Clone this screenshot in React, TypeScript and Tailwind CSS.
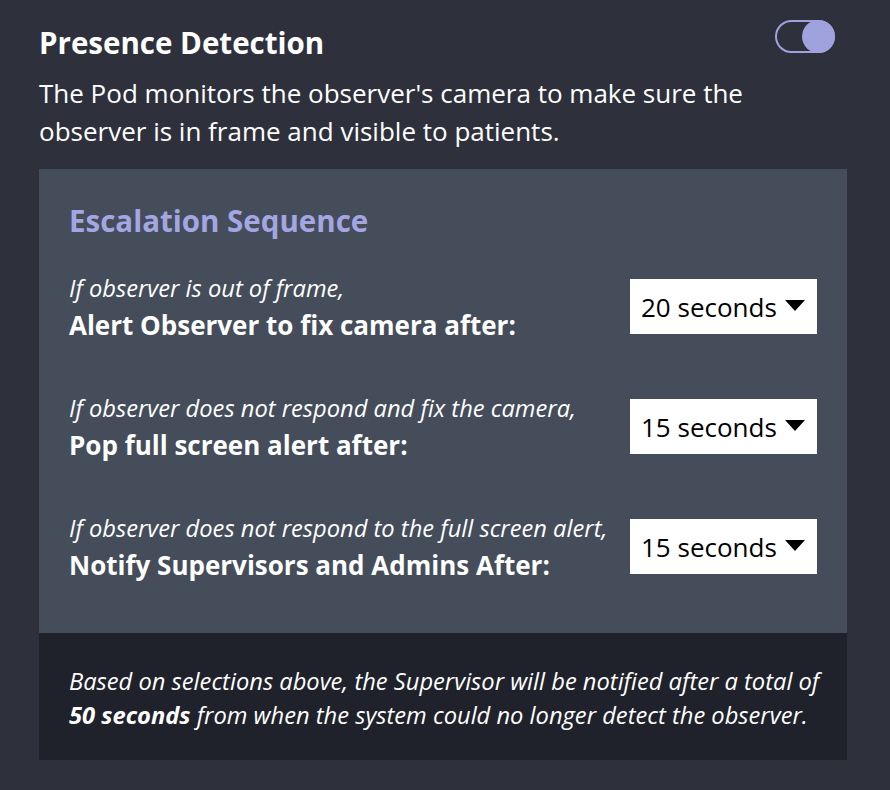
import React from "react";

function Dropdown({ value }: { value: string }) {
  return (
    <div className="mb-[5px] flex h-[55px] w-[187px] shrink-0 items-center bg-white pl-[11px] text-[26px] text-black">
      <span className="leading-none">{value}</span>
      <svg width="20" height="11" viewBox="0 0 20 11" className="ml-[8px] mb-[2px]">
        <polygon points="0,0 20,0 10,11" fill="#000" />
      </svg>
    </div>
  );
}

function Row({ hint, label, value }: { hint: string; label: string; value: string }) {
  return (
    <div className="flex items-center justify-between">
      <div className="flex flex-col">
        <span className="text-[23.7px] italic leading-[32px] text-white">{hint}</span>
        <span className="text-[26px] font-bold leading-[42px] text-white">{label}</span>
      </div>
      <Dropdown value={value} />
    </div>
  );
}

export default function App() {
  return (
    <div
      className="h-[790px] w-[890px] bg-[#2e313c] pl-[39px] pr-[43px] pt-[24px] text-white"
      style={{ fontFamily: '"Open Sans", sans-serif' }}
    >
      <div className="flex items-start justify-between">
        <h1 className="text-[29.5px] font-bold leading-[38px]">Presence Detection</h1>
        <div className="relative mr-[12px] mt-[-4px] h-[33px] w-[60px] rounded-full border-2 border-[#9fa2dc]">
          <div className="absolute right-[-2px] top-[-2px] h-[33px] w-[33px] rounded-full bg-[#9fa2dc]" />
        </div>
      </div>
      <p className="mt-[12px] text-[26px] leading-[38px]">
        The Pod monitors the observer's camera to make sure the
        <br />
        observer is in frame and visible to patients.
      </p>
      <div className="mt-[19px] w-[808px]">
        <div className="bg-[#454d5b] pb-[47px] pl-[30px] pr-[30px] pt-[32px]">
          <h2 className="text-[29.5px] font-bold leading-[40px] text-[#a3a6e2]">Escalation Sequence</h2>
          <div className="mt-[31px] flex flex-col gap-[46px]">
            <Row hint="If observer is out of frame," label="Alert Observer to fix camera after:" value="20 seconds" />
            <Row
              hint="If observer does not respond and fix the camera,"
              label="Pop full screen alert after:"
              value="15 seconds"
            />
            <Row
              hint="If observer does not respond to the full screen alert,"
              label="Notify Supervisors and Admins After:"
              value="15 seconds"
            />
          </div>
        </div>
        <div className="h-[127px] bg-[#1f222b] pl-[30px] pt-[31px] text-[23.7px] italic leading-[34px]">
          Based on selections above, the Supervisor will be notified after a total of
          <br />
          <b>50 seconds</b> from when the system could no longer detect the observer.
        </div>
      </div>
    </div>
  );
}
